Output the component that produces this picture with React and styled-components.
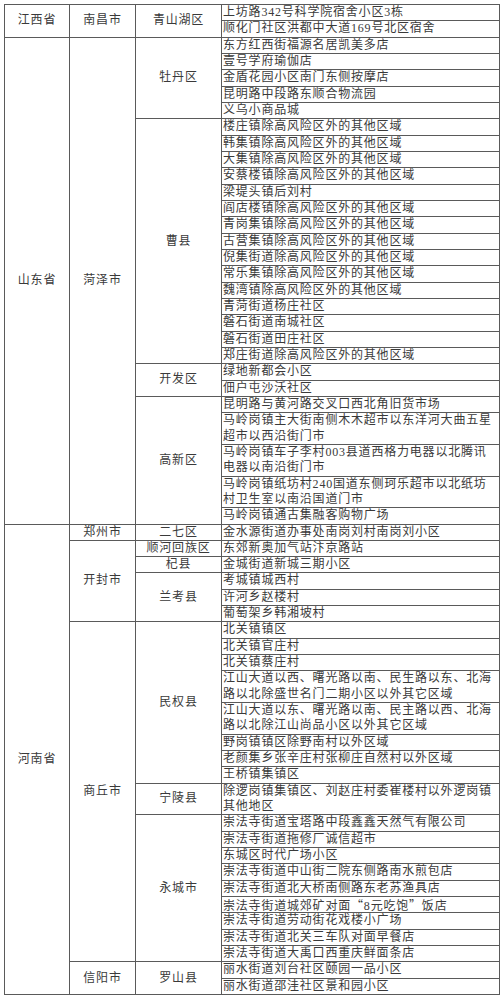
import React from "react";
import styled, { createGlobalStyle } from "styled-components";

const GlobalStyle = createGlobalStyle`
  html, body {
    margin: 0;
    padding: 0;
    background: #fff;
  }
`;

const Page = styled.div`
  padding: 4px 4px 5px 4px;
  font-family: "Liberation Serif", "Noto Sans CJK SC", serif;
  font-size: 12px;
  color: #3a3a3a;
`;

const Table = styled.table`
  width: 495px;
  table-layout: fixed;
  border-collapse: collapse;
  letter-spacing: 0.8px;
`;

const Cell = styled.td`
  border: 1px solid #5a5a5a;
  padding: ${(p) => (p.$left ? "0 0 0 1px" : "0")};
  text-align: ${(p) => (p.$left ? "left" : "center")};
  vertical-align: middle;
  line-height: 15.33px;
  white-space: nowrap;
  overflow: hidden;
`;

const Line = styled.div`
  height: 15.33px;
`;

const Wide = styled.span`
  font-family: "Noto Sans CJK SC", sans-serif;
  font-feature-settings: "fwid";
`;

const data = [
  {
    province: "江西省",
    cities: [
      {
        city: "南昌市",
        districts: [
          {
            name: "青山湖区",
            items: ["上坊路342号科学院宿舍小区3栋", "顺化门社区洪都中大道169号北区宿舍"],
          },
        ],
      },
    ],
  },
  {
    province: "山东省",
    cities: [
      {
        city: "菏泽市",
        districts: [
          {
            name: "牡丹区",
            items: [
              "东方红西街福源名居凯美多店",
              "壹号学府瑜伽店",
              "金盾花园小区南门东侧按摩店",
              "昆明路中段路东顺合物流园",
              "义乌小商品城",
            ],
          },
          {
            name: "曹县",
            items: [
              "楼庄镇除高风险区外的其他区域",
              "韩集镇除高风险区外的其他区域",
              "大集镇除高风险区外的其他区域",
              "安蔡楼镇除高风险区外的其他区域",
              "梁堤头镇后刘村",
              "阎店楼镇除高风险区外的其他区域",
              "青岗集镇除高风险区外的其他区域",
              "古营集镇除高风险区外的其他区域",
              "倪集街道除高风险区外的其他区域",
              "常乐集镇除高风险区外的其他区域",
              "魏湾镇除高风险区外的其他区域",
              "青菏街道杨庄社区",
              "磐石街道南城社区",
              "磐石街道田庄社区",
              "郑庄街道除高风险区外的其他区域",
            ],
          },
          {
            name: "开发区",
            items: ["绿地新都会小区", "佃户屯沙沃社区"],
          },
          {
            name: "高新区",
            items: [
              "昆明路与黄河路交叉口西北角旧货市场",
              "马岭岗镇主大街南侧木木超市以东洋河大曲五星\n超市以西沿街门市",
              "马岭岗镇车子李村003县道西格力电器以北腾讯\n电器以南沿街门市",
              "马岭岗镇纸坊村240国道东侧珂乐超市以北纸坊\n村卫生室以南沿国道门市",
              "马岭岗镇通古集融客购物广场",
            ],
          },
        ],
      },
    ],
  },
  {
    province: "河南省",
    cities: [
      {
        city: "郑州市",
        districts: [{ name: "二七区", items: ["金水源街道办事处南岗刘村南岗刘小区"] }],
      },
      {
        city: "开封市",
        districts: [
          { name: "顺河回族区", items: ["东郊新奥加气站汴京路站"] },
          { name: "杞县", items: ["金城街道新城三期小区"] },
          { name: "兰考县", items: ["考城镇城西村", "许河乡赵楼村", "葡萄架乡韩湘坡村"] },
        ],
      },
      {
        city: "商丘市",
        districts: [
          {
            name: "民权县",
            items: [
              "北关镇镇区",
              "北关镇官庄村",
              "北关镇蔡庄村",
              "江山大道以西、曙光路以南、民生路以东、北海\n路以北除盛世名门二期小区以外其它区域",
              "江山大道以东、曙光路以南、民主路以西、北海\n路以北除江山尚品小区以外其它区域",
              "野岗镇镇区除野南村以外区域",
              "老颜集乡张辛庄村张柳庄自然村以外区域",
              "王桥镇集镇区",
            ],
          },
          {
            name: "宁陵县",
            items: ["除逻岗镇集镇区、刘赵庄村委崔楼村以外逻岗镇\n其他地区"],
          },
          {
            name: "永城市",
            items: [
              "崇法寺街道宝塔路中段鑫鑫天然气有限公司",
              "崇法寺街道拖修厂诚信超市",
              "东城区时代广场小区",
              "崇法寺街道中山街二院东侧路南水煎包店",
              "崇法寺街道北大桥南侧路东老苏渔具店",
              "崇法寺街道城郊矿对面“8元吃饱”饭店",
              "崇法寺街道劳动街花戏楼小广场",
              "崇法寺街道北关三车队对面早餐店",
              "崇法寺街道大禹口西重庆鲜面条店",
            ],
          },
        ],
      },
      {
        city: "信阳市",
        districts: [
          {
            name: "罗山县",
            items: ["丽水街道刘台社区颐园一品小区", "丽水街道邵洼社区景和园小区"],
          },
        ],
      },
    ],
  },
];

// quotes look full width in the reference
const renderLine = (line) =>
  line.split(/([“”])/).map((part, i) =>
    part === "“" || part === "”" ? <Wide key={i}>{part}</Wide> : part
  );

const countCity = (c) => c.districts.reduce((n, d) => n + d.items.length, 0);
const countProvince = (p) => p.cities.reduce((n, c) => n + countCity(c), 0);

const buildRows = () => {
  const rows = [];
  data.forEach((p) => {
    p.cities.forEach((c, ci) => {
      c.districts.forEach((d, di) => {
        d.items.forEach((item, ii) => {
          const firstOfDistrict = ii === 0;
          const firstOfCity = firstOfDistrict && di === 0;
          const firstOfProvince = firstOfCity && ci === 0;
          rows.push(
            <tr key={`${p.province}-${c.city}-${d.name}-${ii}`}>
              {firstOfProvince && <Cell rowSpan={countProvince(p)}>{p.province}</Cell>}
              {firstOfCity && <Cell rowSpan={countCity(c)}>{c.city}</Cell>}
              {firstOfDistrict && <Cell rowSpan={d.items.length}>{d.name}</Cell>}
              <Cell $left>
                {item.split("\n").map((line, li) => (
                  <Line key={li}>{renderLine(line)}</Line>
                ))}
              </Cell>
            </tr>
          );
        });
      });
    });
  });
  return rows;
};

export default function App() {
  return (
    <>
      <GlobalStyle />
      <Page>
        <Table>
          <colgroup>
            <col style={{ width: 65 }} />
            <col style={{ width: 66 }} />
            <col style={{ width: 86 }} />
            <col style={{ width: 278 }} />
          </colgroup>
          <tbody>{buildRows()}</tbody>
        </Table>
      </Page>
    </>
  );
}
